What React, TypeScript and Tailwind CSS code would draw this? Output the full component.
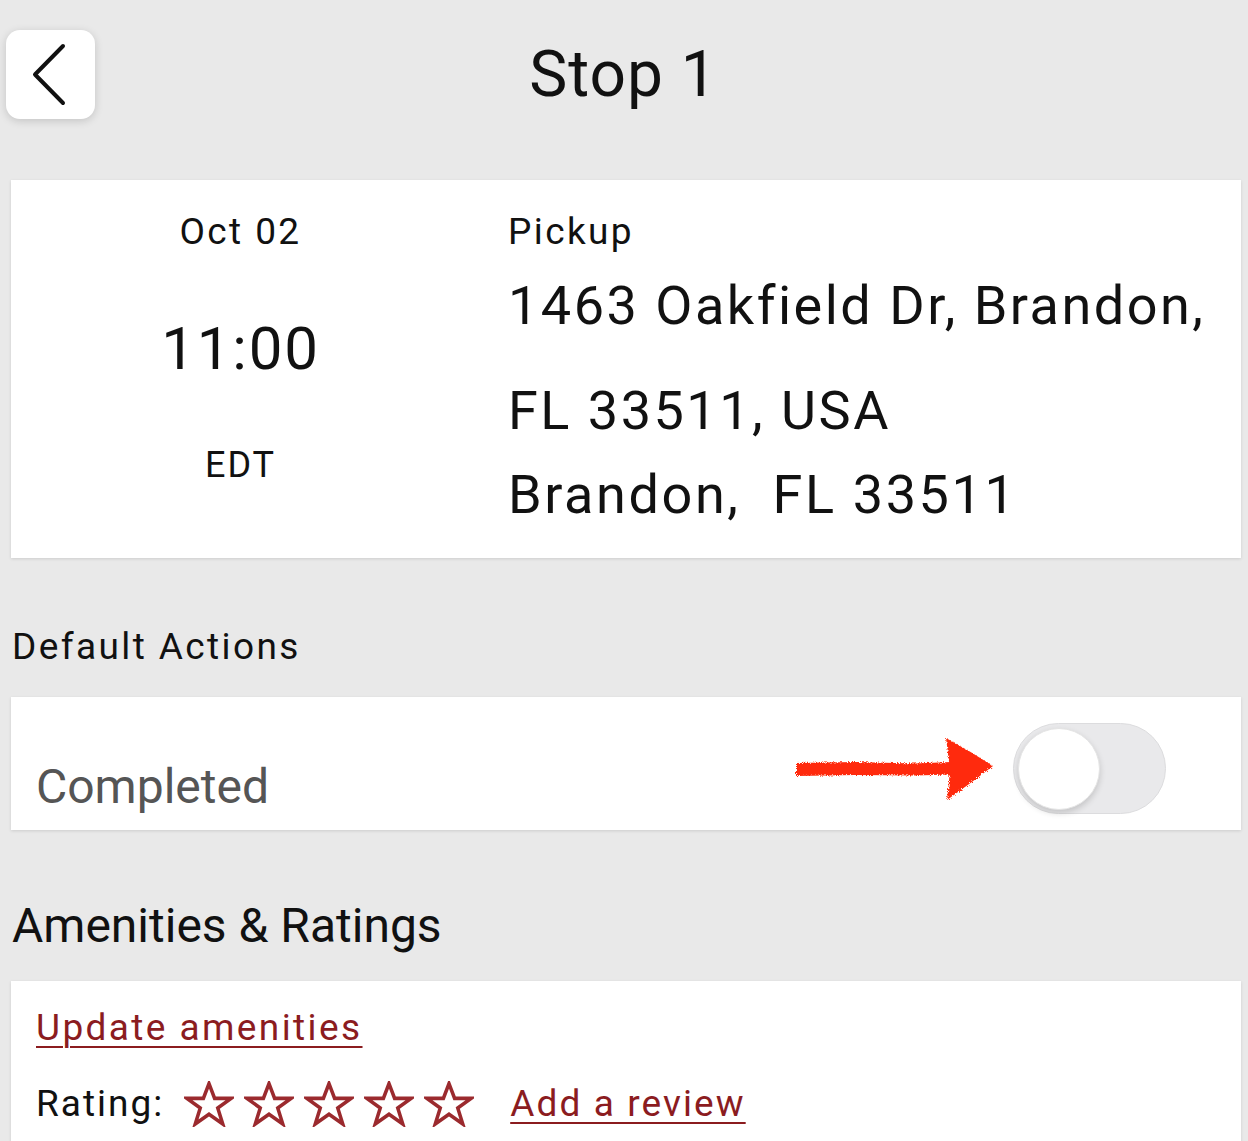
import { useState } from "react";

function BackChevron() {
  return (
    <svg width="89" height="89" viewBox="0 0 89 89" fill="none">
      <path
        d="M57 16 L29 44.5 L57 73"
        stroke="#111"
        strokeWidth="4"
        strokeLinecap="round"
        strokeLinejoin="round"
      />
    </svg>
  );
}

// hand-drawn red marker arrow pointing at the toggle
function MarkerArrow() {
  return (
    <svg width="200" height="64" viewBox="0 0 200 64" fill="none">
      <defs>
        <filter id="rough" x="-5%" y="-10%" width="110%" height="120%">
          <feTurbulence type="fractalNoise" baseFrequency="1.1" numOctaves="2" seed="5" />
          <feDisplacementMap in="SourceGraphic" scale="4.5" />
        </filter>
      </defs>
      <g filter="url(#rough)" fill="#ff2a0a">
        <path d="M1 26 L60 25 L120 26.5 L156 25 L156 37.5 L120 38.5 L60 38 L1 39 Z" />
        <path d="M151 1 Q175 14 198 29 Q176 46 152 63 Q154 46 155 32 Q153 16 151 1 Z" />
      </g>
    </svg>
  );
}

function StarOutline() {
  return (
    <svg width="50" height="46" viewBox="0 0 24 22" fill="none">
      <path
        d="M12 1.2 L14.7 8.3 L22.6 8.3 L16.2 12.9 L18.6 20.6 L12 15.9 L5.4 20.6 L7.8 12.9 L1.4 8.3 L9.3 8.3 Z"
        stroke="#9b2a2e"
        strokeWidth="1.7"
        strokeLinejoin="miter"
      />
    </svg>
  );
}

function Toggle({ on, onChange }: { on: boolean; onChange: (v: boolean) => void }) {
  return (
    <button
      type="button"
      onClick={() => onChange(!on)}
      className={`relative w-[153px] h-[91px] rounded-full border border-[#dcdcde] flex items-center px-[4px] ${
        on ? "bg-[#4cd964] justify-end" : "bg-[#e9e9eb] justify-start"
      }`}
      aria-pressed={on}
    >
      <span className="block w-[82px] h-[82px] rounded-full bg-white shadow-[0_3px_6px_rgba(0,0,0,0.16)] border border-[#e4e4e4]" />
    </button>
  );
}

export default function App() {
  const [completed, setCompleted] = useState(false);

  return (
    <div className="min-h-screen bg-[#e9e9e9] font-['Roboto',sans-serif] text-[#111]">
      {/* Header */}
      <div className="pt-[30px] pl-[6px] pr-[7px] grid grid-cols-[89px_1fr_89px] items-center">
        <button className="w-[89px] h-[89px] rounded-[14px] bg-white shadow-[0_2px_8px_rgba(0,0,0,0.16)] flex items-center justify-center">
          <BackChevron />
        </button>
        <h1 className="text-center text-[64px] leading-[64px] tracking-[1px] text-[#111]">
          Stop 1
        </h1>
        <div />
      </div>

      {/* Stop card */}
      <div className="mt-[61px] ml-[11px] mr-[7px] bg-white shadow-[0_1px_3px_rgba(0,0,0,0.12)] grid grid-cols-[459px_1fr] pt-[30px] pb-[31px]">
        <div className="flex flex-col items-center">
          <div className="text-[37px] leading-[44px] tracking-[2.4px]">Oct 02</div>
          <div className="mt-[60px] text-[60px] leading-[70px] tracking-[1.8px]">11:00</div>
          <div className="mt-[59px] text-[36px] leading-[44px] tracking-[2px]">EDT</div>
        </div>
        <div className="pl-[38px]">
          <div className="text-[37px] leading-[44px] tracking-[2.4px]">Pickup</div>
          <div className="-mt-[1px] text-[54px] leading-[105px] tracking-[2.5px] whitespace-nowrap">
            1463 Oakfield Dr, Brandon,
            <br />
            FL 33511, USA
          </div>
          <div className="text-[54px] leading-[64px] tracking-[2.6px] whitespace-pre">
            {"Brandon,  FL 33511"}
          </div>
        </div>
      </div>

      {/* Default actions */}
      <div className="mt-[67px] pl-[12px] text-[37px] leading-[44px] tracking-[2.4px]">
        Default Actions
      </div>
      <div className="mt-[28px] ml-[11px] mr-[7px] bg-white shadow-[0_1px_3px_rgba(0,0,0,0.12)] flex items-start justify-between">
        <div className="pl-[25px] pt-[62px] pb-[15px] text-[48px] leading-[56px] text-[#555]">
          Completed
        </div>
        <div className="mt-[26px] mr-[75px] flex items-center gap-[18px]">
          <MarkerArrow />
          <Toggle on={completed} onChange={setCompleted} />
        </div>
      </div>

      {/* Amenities */}
      <h2 className="mt-[68px] pl-[12px] text-[48px] leading-[56px] text-[#111]">
        Amenities &amp; Ratings
      </h2>
      <div className="mt-[27px] ml-[11px] mr-[7px] bg-white shadow-[0_1px_3px_rgba(0,0,0,0.12)] pl-[25px] pt-[25px] pb-[40px]">
        <a href="#" className="block w-fit text-[37px] leading-[44px] tracking-[2.4px] text-[#8b1c1f] underline underline-offset-[6px] decoration-2">
          Update amenities
        </a>
        <div className="mt-[31px] flex items-center">
          <span className="text-[37px] leading-[44px] tracking-[2px]">Rating:</span>
          <div className="ml-[20px] flex items-center gap-[10px]">
            <StarOutline />
            <StarOutline />
            <StarOutline />
            <StarOutline />
            <StarOutline />
          </div>
          <a href="#" className="ml-[36px] text-[37px] leading-[44px] tracking-[2.1px] text-[#8b1c1f] underline underline-offset-[6px] decoration-2">
            Add a review
          </a>
        </div>
      </div>
    </div>
  );
}
